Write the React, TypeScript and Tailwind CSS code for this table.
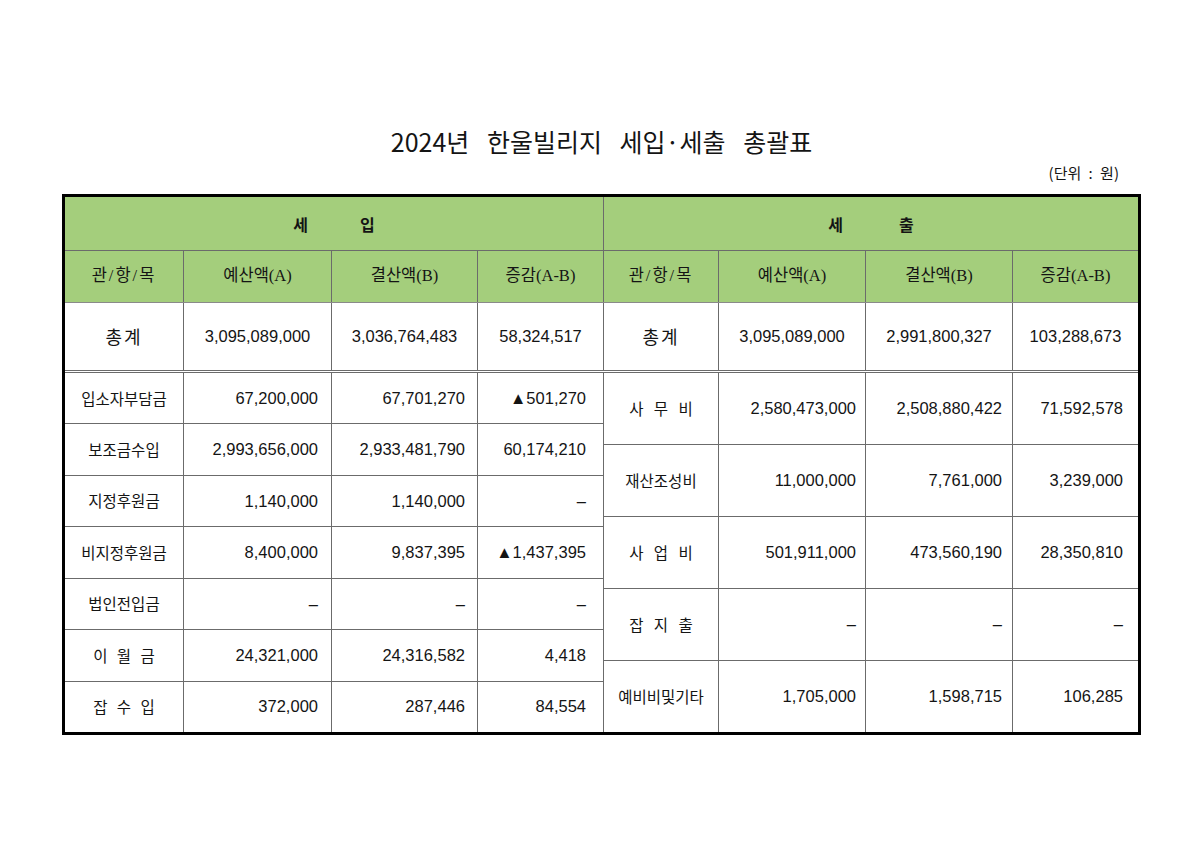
import React from "react";

const left = [
  ["입소자부담금", "67,200,000", "67,701,270", "▲501,270"],
  ["보조금수입", "2,993,656,000", "2,933,481,790", "60,174,210"],
  ["지정후원금", "1,140,000", "1,140,000", "–"],
  ["비지정후원금", "8,400,000", "9,837,395", "▲1,437,395"],
  ["법인전입금", "–", "–", "–"],
  ["이 월 금", "24,321,000", "24,316,582", "4,418"],
  ["잡 수 입", "372,000", "287,446", "84,554"],
];

const right = [
  ["사 무 비", "2,580,473,000", "2,508,880,422", "71,592,578"],
  ["재산조성비", "11,000,000", "7,761,000", "3,239,000"],
  ["사 업 비", "501,911,000", "473,560,190", "28,350,810"],
  ["잡 지 출", "–", "–", "–"],
  ["예비비및기타", "1,705,000", "1,598,715", "106,285"],
];

const heads = ["관/항/목", "예산액(A)", "결산액(B)", "증감(A-B)"];

const KR = "font-['Noto_Sans_CJK_KR',sans-serif]";
const NUM = "font-['Liberation_Sans','Noto_Sans_CJK_KR',sans-serif]";
const SERIF = "font-['Liberation_Serif','Noto_Sans_CJK_KR',serif]";

export default function App() {
  return (
    <div className="w-[1200px] h-[848px] bg-white text-[#141414] font-['Noto_Sans_CJK_KR','Liberation_Sans',sans-serif]">
      <div className="ml-[62px] w-[1079px] pt-[124px]">
        <h1 className={`${KR} text-center text-[25px] leading-[34px] font-normal [word-spacing:12px]`}>
          2024년 한울빌리지 세입·세출 총괄표
        </h1>
        <div className={`${KR} mt-[5px] pr-[22px] text-right text-[15px] leading-[20px] [word-spacing:4px]`}>
          (단위 : 원)
        </div>

        <div className="mt-[11px] border-[3px] border-black">
          {/* header row 1 */}
          <div className="flex h-[54px] border-b border-[#6b6b6b] bg-[#a4ce7c]">
            <div className="w-[539px] border-r border-[#6b6b6b] flex items-center justify-center gap-[52px] text-[16px] font-bold">
              <span>세</span>
              <span>입</span>
            </div>
            <div className="flex-1 flex items-center justify-center gap-[56px] text-[16px] font-bold">
              <span>세</span>
              <span>출</span>
            </div>
          </div>

          {/* header row 2 */}
          <div className={`flex h-[52px] border-b border-[#8a8a8a] bg-[#a4ce7c] ${SERIF} text-[16.5px]`}>
            {heads.map((h, i) => (
              <div
                key={"l" + i}
                className={
                  i === 0
                    ? "w-[119px] border-r border-[#6b6b6b] flex items-center justify-center tracking-[2px]"
                    : i === 1
                    ? "w-[148px] border-r border-[#6b6b6b] flex items-center justify-center"
                    : i === 2
                    ? "w-[146px] border-r border-[#6b6b6b] flex items-center justify-center"
                    : "w-[126px] border-r border-[#6b6b6b] flex items-center justify-center"
                }
              >
                {h}
              </div>
            ))}
            {heads.map((h, i) => (
              <div
                key={"r" + i}
                className={
                  i === 0
                    ? "w-[115px] border-r border-[#6b6b6b] flex items-center justify-center tracking-[2px]"
                    : i === 1
                    ? "w-[147px] border-r border-[#6b6b6b] flex items-center justify-center"
                    : i === 2
                    ? "w-[147px] border-r border-[#6b6b6b] flex items-center justify-center"
                    : "flex-1 flex items-center justify-center"
                }
              >
                {h}
              </div>
            ))}
          </div>

          {/* total row */}
          <div className="flex h-[70px] border-b-[3px] border-double border-[#6b6b6b] text-[16.5px]">
            <div className={`${KR} w-[119px] border-r border-[#6b6b6b] flex items-center justify-center tracking-[2px] text-[18px]`}>총계</div>
            <div className={`${NUM} w-[148px] border-r border-[#6b6b6b] flex items-center justify-center`}>3,095,089,000</div>
            <div className={`${NUM} w-[146px] border-r border-[#6b6b6b] flex items-center justify-center`}>3,036,764,483</div>
            <div className={`${NUM} w-[126px] border-r border-[#6b6b6b] flex items-center justify-center`}>58,324,517</div>
            <div className={`${KR} w-[115px] border-r border-[#6b6b6b] flex items-center justify-center tracking-[2px] text-[18px]`}>총계</div>
            <div className={`${NUM} w-[147px] border-r border-[#6b6b6b] flex items-center justify-center`}>3,095,089,000</div>
            <div className={`${NUM} w-[147px] border-r border-[#6b6b6b] flex items-center justify-center`}>2,991,800,327</div>
            <div className={`${NUM} flex-1 flex items-center justify-center`}>103,288,673</div>
          </div>

          {/* body */}
          <div className="flex h-[359px]">
            <div className="w-[539px] border-r border-[#6b6b6b] flex flex-col">
              {left.map((r, i) => (
                <div key={i} className={i < left.length - 1 ? "flex-1 flex border-b border-[#6b6b6b]" : "flex-1 flex"}>
                  <div className={`${KR} w-[119px] border-r border-[#6b6b6b] flex items-center justify-center text-[15.5px] [word-spacing:6px]`}>{r[0]}</div>
                  <div className={`${NUM} w-[148px] border-r border-[#6b6b6b] flex items-center justify-end pr-[13px] text-[16.5px]`}>{r[1]}</div>
                  <div className={`${NUM} w-[146px] border-r border-[#6b6b6b] flex items-center justify-end pr-[12px] text-[16.5px]`}>{r[2]}</div>
                  <div className={`${NUM} flex-1 flex items-center justify-end pr-[17px] text-[16.5px]`}>{r[3]}</div>
                </div>
              ))}
            </div>
            <div className="flex-1 flex flex-col">
              {right.map((r, i) => (
                <div key={i} className={i < right.length - 1 ? "flex-1 flex border-b border-[#6b6b6b]" : "flex-1 flex"}>
                  <div className={`${KR} w-[115px] border-r border-[#6b6b6b] flex items-center justify-center text-[15.5px] [word-spacing:7px]`}>{r[0]}</div>
                  <div className={`${NUM} w-[147px] border-r border-[#6b6b6b] flex items-center justify-end pr-[9px] text-[16.5px]`}>{r[1]}</div>
                  <div className={`${NUM} w-[147px] border-r border-[#6b6b6b] flex items-center justify-end pr-[10px] text-[16.5px]`}>{r[2]}</div>
                  <div className={`${NUM} flex-1 flex items-center justify-end pr-[15px] text-[16.5px]`}>{r[3]}</div>
                </div>
              ))}
            </div>
          </div>
        </div>
      </div>
    </div>
  );
}
